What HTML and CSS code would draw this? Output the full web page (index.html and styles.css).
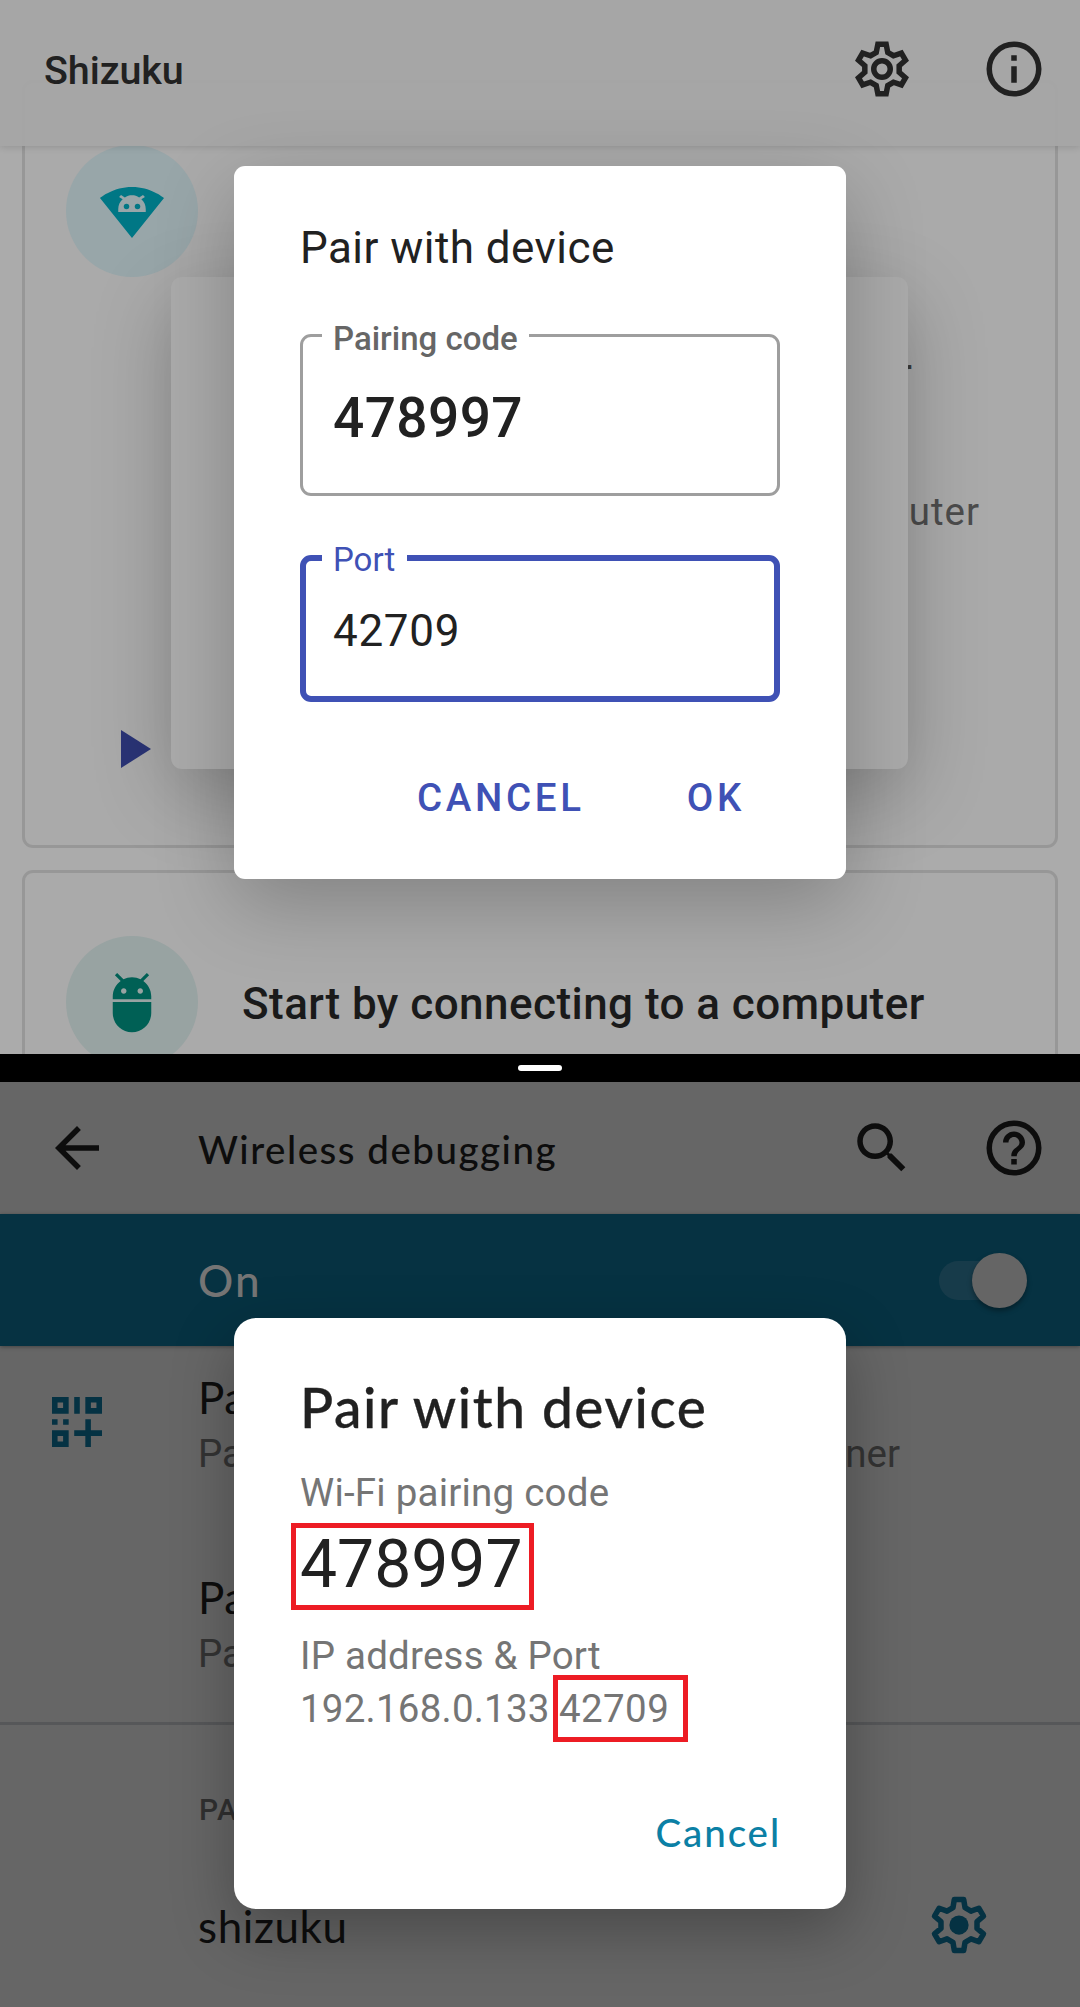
FILE: index.html
```html
<!DOCTYPE html>
<html lang="en">
<head>
<meta charset="utf-8">
<title>Shizuku wireless pairing</title>
<link rel="stylesheet" href="styles.css">
</head>
<body>
<section class="pane pane-top">
  <header class="appbar">
    <h1 class="appbar-title">Shizuku</h1>
    <svg class="icon" viewBox="-12 -12 24 24" fill="none" stroke="currentColor" stroke-width="2"><path d="M-2.1-6-1.5-9 1.5-9 2.1-6 4.15-4.82 7.04-5.8 8.54-3.2 6.25-1.18 6.25 1.18 8.54 3.2 7.04 5.8 4.15 4.82 2.1 6 1.5 9-1.5 9-2.1 6-4.15 4.82-7.04 5.8-8.54 3.2-6.25 1.18-6.25-1.18-8.54-3.2-7.04-5.8-4.15-4.82Z"/><circle r="3"/></svg>
    <svg class="icon" viewBox="0 0 24 24" fill="currentColor"><path d="M11 7h2v2h-2zm0 4h2v6h-2z"/><circle cx="12" cy="12" r="9" fill="none" stroke="currentColor" stroke-width="2"/></svg>
  </header>

  <article class="card card-wireless">
    <div class="avatar avatar-cyan">
      <svg class="icon" viewBox="0 0 24 24"><path fill="#007785" d="M12 21.8 23.64 7.3C23.19 6.96 18.7 3.3 12 3.3S.81 6.96.36 7.3Z"/><path fill="#98a6a9" d="M7 12.4V11.3C7 9.8 7.6 8.6 8.6 7.7L7.3 6.9 8 6.2 9.4 7.1C10.2 6.5 11 6.3 12 6.3s1.8.2 2.6.8L16 6.2l.7.7-1.3.8C16.4 8.6 17 9.8 17 11.3v1.1Z"/><circle cx="10" cy="10.4" r="1" fill="#007785"/><circle cx="14" cy="10.4" r="1" fill="#007785"/></svg>
    </div>
    <p class="card-title wireless-title">r</p>
    <p class="wireless-desc">uter</p>
    <svg class="play" viewBox="0 0 30 38"><path d="M0 0 30 19 0 38Z" fill="#2a3476"/></svg>
  </article>

  <article class="card card-computer">
    <div class="avatar avatar-teal">
      <svg class="icon" viewBox="0 0 24 24" fill="#006055"><path d="M5 16c0 3.87 3.13 7 7 7s7-3.13 7-7v-4H5v4zM16.12 4.37l2.1-2.1-.82-.83-2.3 2.31C14.16 3.28 13.12 3 12 3s-2.16.28-3.09.75L6.6 1.44l-.82.83 2.1 2.1C6.14 5.64 5 7.68 5 10v1h14v-1c0-2.32-1.14-4.36-2.88-5.63zM9 9c-.55 0-1-.45-1-1s.45-1 1-1 1 .45 1 1-.45 1-1 1zm6 0c-.55 0-1-.45-1-1s.45-1 1-1 1 .45 1 1-.45 1-1 1z"/></svg>
    </div>
    <h2 class="card-title">Start by connecting to a computer</h2>
  </article>

  <div class="sheet-behind"></div>

  <div class="dialog dialog-input">
    <h2 class="input-title">Pair with device</h2>
    <div class="field field-code"><span class="field-label">Pairing code</span><span class="field-value">478997</span></div>
    <div class="field field-port"><span class="field-label">Port</span><span class="field-value">42709</span></div>
    <div class="actions"><span>CANCEL</span><span>OK</span></div>
  </div>
</section>

<div class="splitter"><div class="splitter-handle"></div></div>

<section class="pane pane-bottom">
  <header class="toolbar">
    <svg class="icon" viewBox="0 0 24 24" fill="currentColor"><path d="M20 11H7.83l5.59-5.59L12 4l-8 8 8 8 1.41-1.41L7.83 13H20v-2z"/></svg>
    <h1 class="toolbar-title">Wireless debugging</h1>
    <svg class="icon" viewBox="0 0 24 24" fill="currentColor"><path d="M15.5 14h-.79l-.28-.27C15.41 12.59 16 11.11 16 9.5 16 5.91 13.09 3 9.5 3S3 5.91 3 9.5 5.91 16 9.5 16c1.61 0 3.09-.59 4.23-1.57l.27.28v.79l5 4.99L20.49 19l-4.99-5zm-6 0C7.01 14 5 11.99 5 9.5S7.01 5 9.5 5 14 7.01 14 9.5 11.99 14 9.5 14z"/></svg>
    <svg class="icon" viewBox="0 0 24 24" fill="currentColor"><circle cx="12" cy="12" r="9" fill="none" stroke="currentColor" stroke-width="2"/><path d="M11 16h2v2h-2zM12 6c-2.21 0-4 1.79-4 4h2c0-1.1.9-2 2-2s2 .9 2 2c0 2-3 1.75-3 5h2c0-2.25 3-2.5 3-5 0-2.21-1.79-4-4-4z"/></svg>
  </header>
  <div class="switchbar"><span>On</span><div class="switch"><div class="switch-thumb"></div></div></div>

  <div class="row row-qr">
    <svg class="qr" viewBox="0 0 18 18" fill="#053243" fill-rule="evenodd"><path d="M0 0h6v6H0zM2 2v2h2V2zM8 0h2v6H8zM12 0h6v6h-6zM14 2v2h2V2zM0 8h2v2H0zM4 8h2v2H4zM0 12h6v6H0zM2 14v2h2v-2zM12 8h2v4h4v2h-4v4h-2v-4H8v-2h4z"/></svg>
    <div class="row-body">
      <p class="row-title">Pa</p>
      <p class="row-sub"><span>Pa</span><span>ner</span></p>
    </div>
  </div>
  <div class="row row-code">
    <div class="row-body">
      <p class="row-title">Pa</p>
      <p class="row-sub"><span>Pa</span></p>
    </div>
  </div>
  <p class="category">PA</p>
  <div class="device">
    <p class="row-title">shizuku</p>
    <svg class="icon" viewBox="-12 -12 24 24" fill="none" stroke="#053243" stroke-width="2" stroke-linejoin="round"><path d="M-2.2-6.3-1.7-9.3 1.7-9.3 2.2-6.3 4.35-5.05 7.2-6.1 8.9-3.2 6.55-1.25 6.55 1.25 8.9 3.2 7.2 6.1 4.35 5.05 2.2 6.3 1.7 9.3-1.7 9.3-2.2 6.3-4.35 5.05-7.2 6.1-8.9 3.2-6.55 1.25-6.55-1.25-8.9-3.2-7.2-6.1-4.35-5.05Z"/><circle r="3.5" fill="#053243" stroke="none"/></svg>
  </div>

  <div class="dialog dialog-info">
    <h2 class="info-title">Pair with device</h2>
    <p class="info-label">Wi-Fi pairing code</p>
    <p class="mark mark-code">478997</p>
    <p class="info-label info-ip">IP address &amp; Port</p>
    <p class="info-address"><span class="host">192.168.0.133</span><span class="mark mark-port">42709</span></p>
    <p class="info-cancel">Cancel</p>
  </div>
</section>
</body>
</html>
```
FILE: styles.css
```css
* { box-sizing: border-box; }
body { margin: 0; width: 1080px; height: 2007px; overflow: hidden; display: flex; flex-direction: column; background: #000; font-family: Roboto, "Liberation Sans", sans-serif; color: #212121; }
h1, h2, p { margin: 0; font-weight: 400; white-space: nowrap; }
svg { display: block; flex: none; }
.icon { width: 66px; height: 66px; }
.pane { position: relative; overflow: hidden; }
.pane-top { height: 1054px; padding-top: 80px; background: #ababab; }
.pane-bottom { height: 925px; background: #666; color: #0d0d0d; }

.appbar { position: absolute; z-index: 1; top: 0; left: 0; width: 1080px; height: 146px; padding: 0 33px 8px 44px; display: flex; align-items: center; gap: 66px; background: rgba(166, 166, 166, .96); box-shadow: 0 1px 7px rgba(0, 0, 0, .14); }
.appbar-title { flex: 1; font-size: 39.5px; font-weight: 500; line-height: 46px; letter-spacing: -.1px; padding-top: 4px; }

.card { margin: 0 22px; border: 3px solid #979797; border-radius: 11px; background: #aaa; }
.card-wireless { height: 768px; padding: 62px 73px 0 41px; }
.card-computer { height: 300px; margin-top: 22px; padding: 63px 41px 0; display: flex; align-items: flex-start; gap: 44px; }
.card-title { font-size: 44px; font-weight: 500; line-height: 52px; color: #1a1a1a; }
.card-computer .card-title { margin-top: 42px; letter-spacing: .45px; }
.avatar { width: 132px; height: 132px; border-radius: 50%; display: grid; place-items: center; flex: none; }
.avatar-cyan { background: #98a6a9; }
.avatar-teal { background: #98a3a2; }
.wireless-title { margin: 71px 70px 0 0; text-align: right; font-weight: 400; color: #3a3a3a; }
.wireless-desc { margin: 89px 2px 0 0; text-align: right; font-size: 38.5px; line-height: 46px; letter-spacing: 1px; color: #4c4c4c; }
.play { width: 30px; height: 38px; margin: 195px 0 0 55px; }

.sheet-behind { position: absolute; z-index: 2; left: 171px; top: 277px; width: 737px; height: 492px; border-radius: 11px; background: #aaa; box-shadow: 0 24px 80px rgba(0, 0, 0, .23); }
.dialog { position: absolute; z-index: 3; left: 234px; width: 612px; background: #fff; color: #212121; padding: 0 66px; }
.dialog-input { top: 166px; height: 713px; border-radius: 11px; padding-top: 56px; box-shadow: 0 24px 80px rgba(0, 0, 0, .24); }
.input-title { font-size: 44px; line-height: 52px; letter-spacing: .45px; }
.field { position: relative; border-radius: 11px; }
.field-label { position: absolute; padding: 0 11px; background: #fff; font-size: 33px; line-height: 40px; white-space: nowrap; }
.field-value { display: block; }
.field-code { height: 162px; margin-top: 60px; border: 3px solid #9e9e9e; padding: 49px 0 0 30px; font-weight: 500; }
.field-code .field-label { top: -18px; left: 19px; color: #666; }
.field-code .field-value { font-size: 55px; line-height: 64px; letter-spacing: .4px; }
.field-port { height: 147px; margin-top: 59px; border: 6px solid #3f51b5; padding: 44px 0 0 27px; }
.field-port .field-label { top: -21px; left: 16px; padding-right: 12px; color: #3f51b5; }
.field-port .field-value { font-size: 44px; line-height: 52px; letter-spacing: .7px; }
.actions { display: flex; justify-content: flex-end; gap: 102px; margin-top: 73px; padding-right: 35px; font-size: 38.5px; font-weight: 500; line-height: 46px; letter-spacing: 3.7px; color: #3f51b5; }

.splitter { height: 28px; padding-top: 11px; background: #000; }
.splitter-handle { width: 44px; height: 6px; margin: 0 auto; border-radius: 3px; background: #fff; }

.toolbar { height: 132px; padding: 0 33px 0 44px; display: flex; align-items: center; gap: 66px; }
.toolbar-title, .switchbar, .row-title, .info-title, .info-cancel { font-family: Lato, Roboto, sans-serif; }
.toolbar-title { flex: 1; margin-left: 22px; padding-top: 2px; font-size: 38.5px; font-weight: 500; line-height: 46px; letter-spacing: 1.5px; }
.switchbar { height: 132px; padding: 0 53px 0 198px; display: flex; align-items: center; justify-content: space-between; background: #063242; color: #757575; font-size: 44px; font-weight: 500; letter-spacing: 2px; box-shadow: 0 1px 4px rgba(0, 0, 0, .35); }
.switch { width: 88px; height: 39px; border-radius: 20px; background: linear-gradient(90deg, #173b4a 60px, transparent 60px); display: flex; align-items: center; justify-content: flex-end; }
.switch-thumb { width: 55px; height: 55px; flex: none; border-radius: 50%; background: #656565; box-shadow: 0 3px 5px rgba(0, 0, 0, .35); }
.row { display: flex; align-items: flex-start; padding: 24px 180px 0 52px; }
.row-qr { height: 200px; }
.row-code { height: 179px; padding-left: 198px; border-bottom: 3px solid #565759; }
.qr { width: 50px; height: 50px; margin: 27px 96px 0 0; }
.row-body { flex: 1; }
.row-title { font-size: 44px; line-height: 54px; letter-spacing: .6px; }
.row-sub { display: flex; justify-content: space-between; margin-top: 4px; font-size: 38.5px; line-height: 52px; color: #333; }
.category { margin: 65px 0 0 199px; font-size: 30px; font-weight: 500; line-height: 40px; letter-spacing: 1px; color: #303030; }
.device { display: flex; align-items: center; justify-content: space-between; margin-top: 62px; padding: 0 88px 0 198px; }
.device .row-title { padding-top: 2px; }

.dialog-info { top: 236px; height: 591px; border-radius: 22px; padding-top: 56px; box-shadow: 0 22px 62px rgba(0, 0, 0, .29); }
.info-title { font-size: 55px; font-weight: 500; line-height: 66px; letter-spacing: 1.55px; -webkit-text-stroke: .3px; }
.info-label, .info-address { font-size: 38.5px; line-height: 46px; letter-spacing: .22px; color: #757575; }
.info-label { margin-top: 30px; }
.mark { border: 5px solid #ed1c24; background: #fff; }
.mark-code { width: 243px; height: 87px; margin: 7px 0 0 -9px; padding-left: 4px; font-size: 66px; line-height: 74px; }
.info-ip { margin-top: 23px; }
.info-address { height: 67px; margin-top: -4px; display: flex; align-items: center; }
.host { width: 253px; }
.mark-port { width: 135px; height: 67px; padding-left: 1px; line-height: 57px; letter-spacing: .4px; }
.info-cancel { margin: 67px -1px 0 0; text-align: right; font-size: 38.5px; font-weight: 500; line-height: 46px; letter-spacing: 1.9px; color: #0b80a5; }
```
